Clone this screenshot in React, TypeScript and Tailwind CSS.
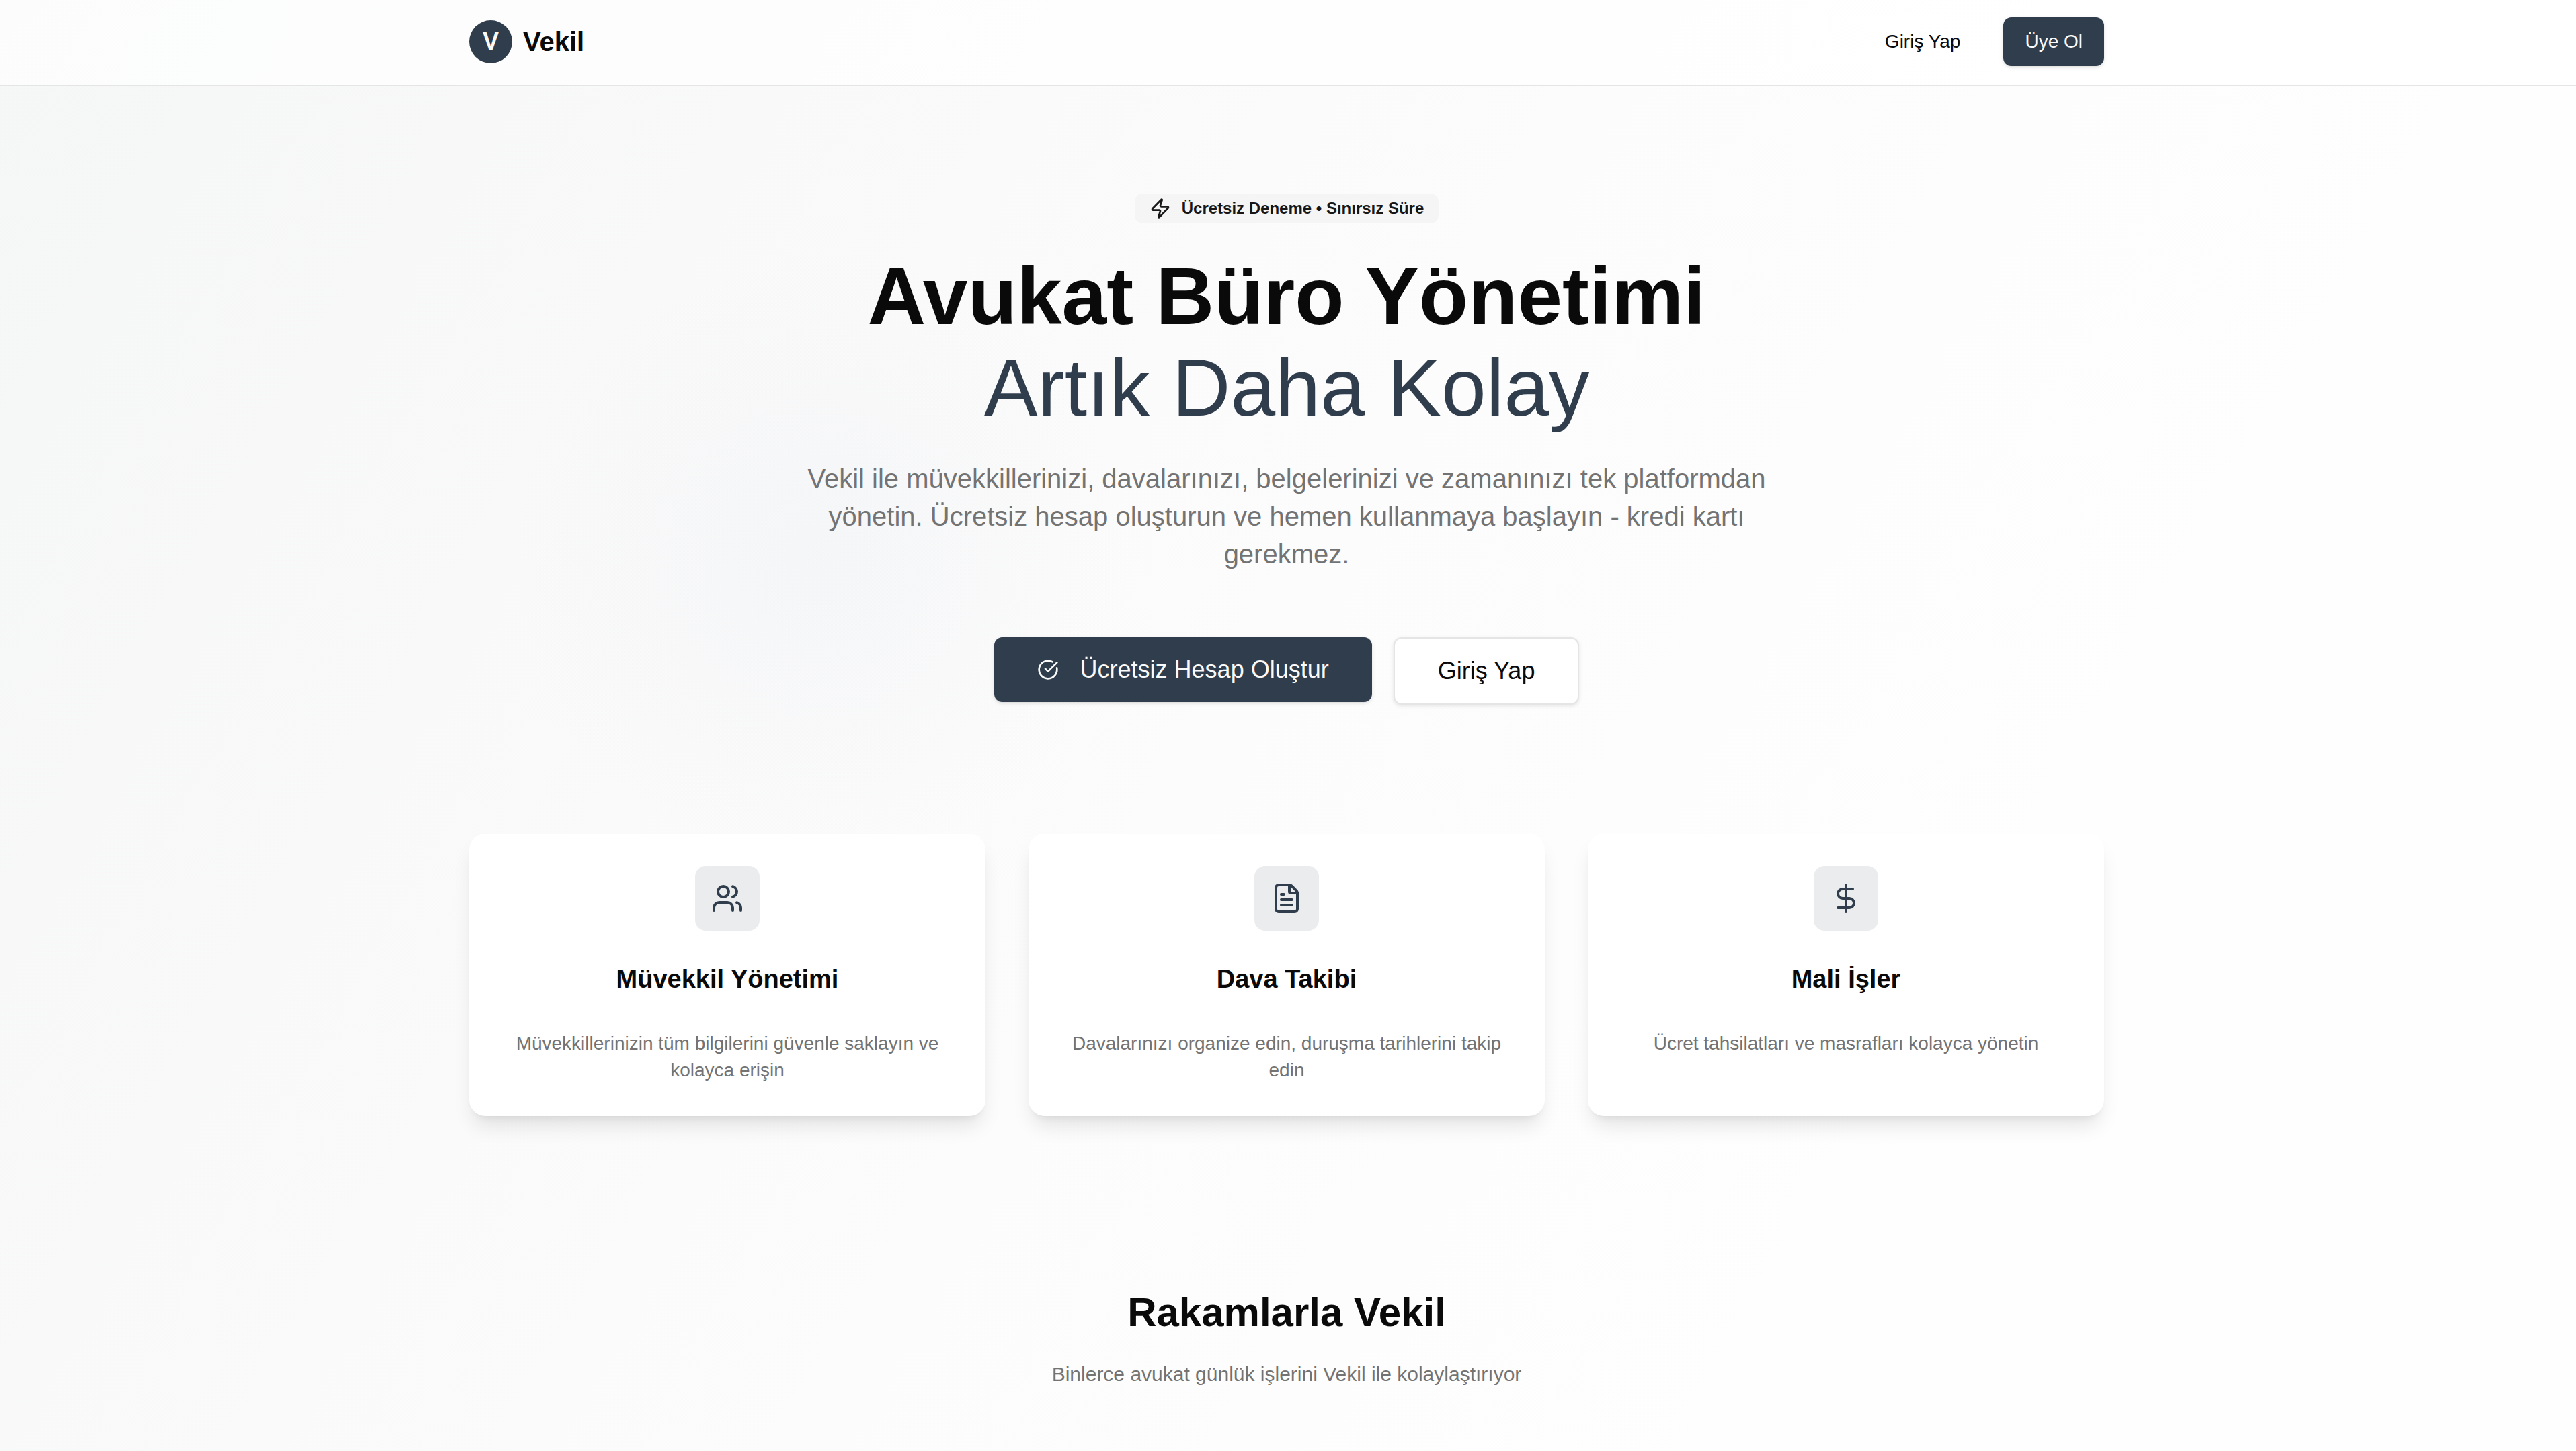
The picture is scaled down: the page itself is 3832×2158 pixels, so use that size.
import { CircleCheckBig, DollarSign, FileText, Users, Zap, type LucideIcon } from "lucide-react";

type Feature = { icon: LucideIcon; title: string; text: string };

const features: Feature[] = [
  {
    icon: Users,
    title: "Müvekkil Yönetimi",
    text: "Müvekkillerinizin tüm bilgilerini güvenle saklayın ve kolayca erişin",
  },
  {
    icon: FileText,
    title: "Dava Takibi",
    text: "Davalarınızı organize edin, duruşma tarihlerini takip edin",
  },
  {
    icon: DollarSign,
    title: "Mali İşler",
    text: "Ücret tahsilatları ve masrafları kolayca yönetin",
  },
];

function Header() {
  return (
    <header className="relative border-b-2 border-[#e5e5e5] bg-white/70 pr-1 pb-0.5">
      <div className="mx-auto flex h-[124px] max-w-[2560px] items-center justify-between px-16">
        <a href="#" className="flex items-center gap-4">
          <span className="flex size-16 items-center justify-center rounded-full bg-[#303d4d] text-[36px] leading-[56px] font-bold text-[#fafafa]">
            V
          </span>
          <span className="text-[40px] leading-[56px] font-bold">Vekil</span>
        </a>
        <nav className="flex items-center gap-8 text-[28px] leading-10">
          <a href="#giris" className="rounded-xl px-8 py-4">
            Giriş Yap
          </a>
          <a
            href="#uye"
            className="rounded-xl bg-[#303d4d] px-8 py-4 text-[#fafafa] shadow-[0_2px_6px_rgba(0,0,0,0.1),0_2px_4px_-2px_rgba(0,0,0,0.1)]"
          >
            Üye Ol
          </a>
        </nav>
      </div>
    </header>
  );
}

function Hero() {
  return (
    <section className="flex flex-col items-center px-16 pt-40 text-center">
      <div className="flex items-center gap-4 rounded-xl border-2 border-transparent bg-[#f5f5f5] px-5 py-1 text-[24px] leading-8 font-bold text-[#171717]">
        <Zap className="size-8" />
        Ücretsiz Deneme • Sınırsız Süre
      </div>
      <h1 className="mt-10 text-[120px] leading-[136px] font-bold">
        Avukat Büro Yönetimi
        <span className="block font-normal text-[#303d4d]">Artık Daha Kolay</span>
      </h1>
      <p className="mt-10 max-w-[1536px] text-[40px] leading-[56px] text-[#737373]">
        Vekil ile müvekkillerinizi, davalarınızı, belgelerinizi ve zamanınızı tek platformdan
        yönetin. Ücretsiz hesap oluşturun ve hemen kullanmaya başlayın - kredi kartı gerekmez.
      </p>
      <div className="mt-24 flex items-start gap-8 text-[36px] leading-[56px]">
        <button
          type="button"
          className="flex items-center gap-8 rounded-xl bg-[#303d4d] px-16 py-5 text-[#fafafa] shadow-[0_2px_6px_rgba(0,0,0,0.1),0_2px_4px_-2px_rgba(0,0,0,0.1)]"
        >
          <CircleCheckBig className="size-8" />
          Ücretsiz Hesap Oluştur
        </button>
        <button
          type="button"
          className="rounded-xl border-2 border-[#e5e5e5] bg-white px-16 py-5 shadow-[0_2px_6px_rgba(0,0,0,0.1)]"
        >
          Giriş Yap
        </button>
      </div>
    </section>
  );
}

function FeatureCard({ icon: Icon, title, text }: Feature) {
  return (
    <article className="flex flex-col items-center rounded-3xl bg-white p-12 text-center shadow-[0_20px_30px_-6px_rgba(0,0,0,0.1),0_8px_12px_-8px_rgba(0,0,0,0.1)]">
      <div className="flex size-24 items-center justify-center rounded-2xl bg-[#eaeced] text-[#303d4d]">
        <Icon className="size-12" />
      </div>
      <h3 className="mt-11 text-[38px] leading-[56px] font-bold">{title}</h3>
      <p className="mt-12 text-[28px] leading-10 text-[#737373]">{text}</p>
    </article>
  );
}

export default function App() {
  return (
    <div className="relative min-h-screen overflow-hidden bg-[linear-gradient(120deg,#f5f6f6_0%,#fafafa_32%,#fcfcfc_48%,#fefefe_75%)] font-['Liberation_Sans',sans-serif] text-[#0a0a0a]">
      <div
        aria-hidden="true"
        className="absolute top-[370px] left-[760px] size-[920px] rounded-full bg-[radial-gradient(closest-side,rgba(205,214,228,0.12),rgba(205,214,228,0.06)_50%,transparent)]"
      />
      <Header />
      <main className="relative pr-1">
        <Hero />
        <section className="mx-auto mt-48 grid max-w-[2560px] grid-cols-3 gap-16 px-16">
          {features.map((feature) => (
            <FeatureCard key={feature.title} {...feature} />
          ))}
        </section>
        <section className="mt-64 px-16 pb-20 text-center">
          <h2 className="text-[60px] leading-[72px] font-bold">Rakamlarla Vekil</h2>
          <p className="mt-8 text-[30px] leading-[48px] text-[#737373]">
            Binlerce avukat günlük işlerini Vekil ile kolaylaştırıyor
          </p>
        </section>
      </main>
    </div>
  );
}
